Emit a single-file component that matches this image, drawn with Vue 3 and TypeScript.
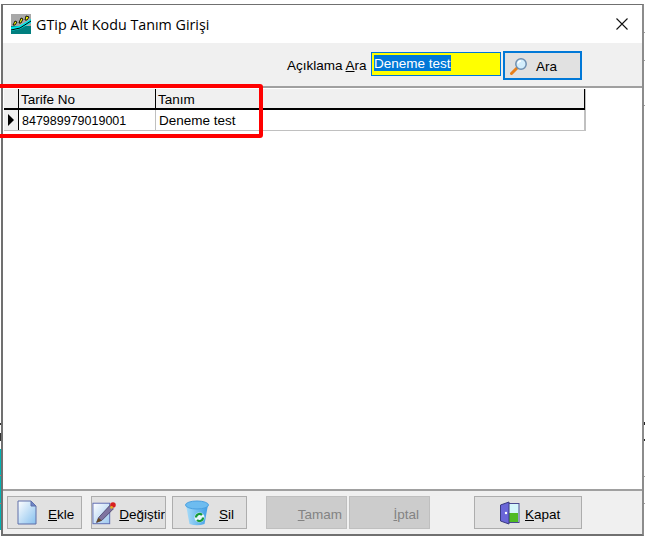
<script setup lang="ts">
interface Row { no: string; name: string }
interface Tick { y: number; h: number; color: string }
const rows: Row[] = [{ no: '847989979019001', name: 'Deneme test' }]
const rightTicks: Tick[] = [
  { y: 32, h: 1, color: '#9a9a9a' },
  { y: 60, h: 1, color: '#9a9a9a' },
  { y: 105, h: 1, color: '#9a9a9a' },
  { y: 422, h: 3, color: '#222222' },
  { y: 439, h: 2, color: '#222222' },
  { y: 476, h: 1, color: '#9a9a9a' },
  { y: 503, h: 1, color: '#9a9a9a' },
]
</script>

<template>
  <div class="page">
    <svg class="backdrop" width="645" height="538" viewBox="0 0 645 538">
      <rect x="0" y="449" width="2" height="81" fill="#00b4b4" />
      <rect x="0" y="423" width="2" height="2" fill="#333" />
      <rect x="0" y="433" width="2" height="8" fill="#333" />
      <rect x="0" y="475" width="2" height="1" fill="#c86a6a" />
      <rect x="0" y="503" width="2" height="1" fill="#c86a6a" />
      <rect v-for="t in rightTicks" :key="t.y" x="644" :y="t.y" width="1" :height="t.h" :fill="t.color" />
    </svg>
    <div class="window">
      <header class="titlebar">
        <svg class="logo" width="20" height="20" viewBox="0 0 20 20">
          <rect width="20" height="20" fill="#a8a8a8" />
          <rect y="12" width="20" height="8" fill="#007f7f" />
          <path d="M0 13 L8 12 L20 5 V9 L9 15 L0 17Z" fill="#00e6e6" />
          <path d="M0 16 L9 14 L20 7" stroke="#000" stroke-width="1" fill="none" />
          <path d="M2 11l2-4 2 1-2 3zM8 9l2-5 2 1-2 4zM14 6l1-4 3 1-2 3z" fill="#ffff00" stroke="#000" stroke-width=".9" />
        </svg>
        <span class="title">GTip Alt Kodu Tanım Girişi</span>
        <svg class="close" width="12" height="12" viewBox="0 0 12 12">
          <path d="M0.5 0.5 L11.5 11.5 M11.5 0.5 L0.5 11.5" stroke="#111" stroke-width="1.1" fill="none" />
        </svg>
      </header>

      <section class="toolbar">
        <label class="search-label">Açıklama <u>A</u>ra</label>
        <div class="search-input"><span class="selected">Deneme test</span></div>
        <button class="search-button" type="button">
          <svg width="18" height="18" viewBox="0 0 18 18">
            <path d="M1.5 16.5 L7 11" stroke="#e8801a" stroke-width="3" stroke-linecap="round" />
            <circle cx="11" cy="7" r="5.2" fill="#d4eefc" stroke="#6f8fb0" stroke-width="1.5" />
            <path d="M8 6.5a3 3 0 0 1 3-2.5" stroke="#fff" stroke-width="1.4" fill="none" />
          </svg>
          <span>Ara</span>
        </button>
      </section>

      <main class="content">
        <div class="grid">
          <div class="grid-row head">
            <div class="cell ind"></div>
            <div class="cell no">Tarife No</div>
            <div class="cell name">Tanım</div>
          </div>
          <div v-for="row in rows" :key="row.no" class="grid-row body-row">
            <div class="cell ind"><i class="arrow"></i></div>
            <div class="cell no">{{ row.no }}</div>
            <div class="cell name">{{ row.name }}</div>
          </div>
        </div>
      </main>

      <footer class="actions">
        <button class="btn ekle" type="button">
          <svg width="20" height="25" viewBox="0 0 20 25">
            <defs>
              <linearGradient id="paper" x1="0" y1="0" x2="1" y2="1">
                <stop offset="0" stop-color="#ffffff" />
                <stop offset="1" stop-color="#86c0ee" />
              </linearGradient>
            </defs>
            <path d="M1 1H14L19 6V24H1Z" fill="url(#paper)" stroke="#5f6fa8" />
            <path d="M14 1V6H19Z" fill="#6f86c8" stroke="#5f6fa8" />
          </svg>
          <span><u>E</u>kle</span>
        </button>
        <button class="btn degistir" type="button">
          <svg width="26" height="26" viewBox="0 0 26 26">
            <defs>
              <linearGradient id="paper2" x1="0" y1="0" x2="1" y2="1">
                <stop offset="0" stop-color="#ffffff" />
                <stop offset="1" stop-color="#9cc8ee" />
              </linearGradient>
            </defs>
            <rect x="1" y="2.5" width="18" height="22" fill="url(#paper2)" stroke="#5a68b0" />
            <path d="M7 18 L19 5 L23 8.5 L10.5 21 L5 23Z" fill="#7e74a0" stroke="#3e3660" stroke-width=".8" />
            <path d="M4.5 23.5L7 18L10.5 21Z" fill="#6a4a20" />
            <circle cx="22.5" cy="4.5" r="3" fill="#d81e1e" />
            <circle cx="21" cy="7" r="1.5" fill="#e8b020" />
          </svg>
          <span class="clip"><u>D</u>eğiştir</span>
        </button>
        <button class="btn sil" type="button">
          <svg width="24" height="26" viewBox="0 0 24 26">
            <defs>
              <linearGradient id="bin" x1="0" y1="0" x2="1" y2="0">
                <stop offset="0" stop-color="#a8dcf8" />
                <stop offset="1" stop-color="#3f9ee6" />
              </linearGradient>
            </defs>
            <path d="M1 5 L4.5 24 Q12 26.5 19.5 24 L23 5Z" fill="url(#bin)" />
            <ellipse cx="12" cy="5" rx="11.5" ry="4" fill="#6dbcf0" stroke="#4aa0e0" />
            <circle cx="14.5" cy="17.5" r="5" fill="#e8f6fc" />
            <path d="M11 17.5a3.5 3.5 0 0 1 6-2.5M18 17.5a3.5 3.5 0 0 1-6 2.5" stroke="#159a38" stroke-width="2.2" fill="none" />
          </svg>
          <span><u>S</u>il</span>
        </button>
        <button class="btn tamam" type="button" disabled><span><u>T</u>amam</span></button>
        <button class="btn iptal" type="button" disabled><span><u>İ</u>ptal</span></button>
        <button class="btn kapat" type="button">
          <svg width="20" height="24" viewBox="0 0 20 24">
            <rect x="8" y="2.5" width="11" height="19" fill="#d4f6fb" stroke="#4a4a90" />
            <rect x="9" y="12" width="9" height="9" fill="#4fbb24" />
            <path d="M0.5 4 L9 1 V23 L0.5 20Z" fill="#6a66d8" stroke="#3a3a80" />
            <circle cx="6" cy="12" r="1.2" fill="#fff" />
          </svg>
          <span><u>K</u>apat</span>
        </button>
      </footer>
    </div>
    <div class="highlight"></div>
  </div>
</template>

<style>
html, body { margin: 0; background: #ffffff; overflow: hidden; }
</style>

<style scoped>
.page {
  position: relative;
  width: 645px;
  height: 538px;
  padding: 4px 0 0 1px;
  box-sizing: border-box;
  overflow: hidden;
  font-family: "Liberation Sans", Arial, sans-serif;
  font-size: 13.5px;
  color: #000;
}
.backdrop {
  position: absolute;
  left: 0;
  top: 0;
}
.window {
  position: relative;
  width: 643px;
  height: 532px;
  box-sizing: border-box;
  border: 1px solid #707070;
  border-left-width: 2px;
  border-right: 2px solid #8c8c8c;
  border-bottom-width: 2px;
  background: #fff;
  display: flex;
  flex-direction: column;
}
.titlebar {
  height: 38px;
  display: flex;
  align-items: center;
  padding: 0 14px 0 8px;
  flex: none;
}
.logo { margin-right: 5px; }
.title {
  font-family: "Open Sans", "Noto Sans", sans-serif;
  font-size: 14.3px;
  flex: 1;
}
.toolbar {
  height: 45px;
  flex: none;
  box-sizing: border-box;
  background: #f0f0f0;
  border-bottom: 2px solid #a0a0a0;
  display: flex;
  align-items: flex-start;
  padding: 8px 0 0 284px;
}
.search-label { margin-top: 7px; width: 84px; white-space: nowrap; }
.search-input {
  box-sizing: border-box;
  width: 130px;
  height: 24px;
  border: 1px solid #0078d7;
  background: #ffff00;
  padding: 2px;
  margin-top: 1px;
  line-height: 17px;
}
.selected { display: inline-block; width: 77px; background: #0078d7; color: #fff; height: 16px; line-height: 17px; white-space: nowrap; }
.search-button {
  box-sizing: border-box;
  width: 79px;
  height: 29px;
  margin-left: 2px;
  border: 2px solid #0078d7;
  background: #e1e1e1;
  display: flex;
  align-items: center;
  padding: 0 0 0 5px;
  font: inherit;
  color: #000;
}
.search-button span { margin-left: 8px; padding-top: 2px; }
.content {
  flex: 1;
  min-height: 0;
  background: #fff;
  padding: 1px 0 0 1px;
}
.grid { width: 582px; border-right: 1px solid #c0c0c0; border-bottom: 1px solid #c0c0c0; box-sizing: border-box; }
.grid-row { display: grid; grid-template-columns: 15px 137px 1fr; }
.head { height: 21px; background: #f0f0f0; border-bottom: 2px solid #000; box-sizing: border-box; }
.head .cell { border-right: 1px solid #000; line-height: 22px; }
.body-row { height: 20px; }
.cell { padding-left: 2px; white-space: nowrap; overflow: hidden; line-height: 22px; box-sizing: border-box; }
.body-row .cell { border-right: 1px solid #c0c0c0; }
.body-row .no { font-size: 12.5px; padding-left: 3px; }
.body-row .name { padding-left: 3px; }
.body-row .ind { background: #f0f0f0; border-right: 1px solid #000; padding: 0; display: flex; align-items: center; justify-content: center; }
.arrow {
  width: 0; height: 0;
  border-left: 6px solid #000;
  border-top: 6px solid transparent;
  border-bottom: 6px solid transparent;
}
.actions {
  height: 45px;
  flex: none;
  box-sizing: border-box;
  background: #f0f0f0;
  border-top: 2px solid #a0a0a0;
  display: flex;
  align-items: flex-start;
  padding: 5px 0 0 4px;
}
.btn {
  box-sizing: border-box;
  height: 33px;
  border: 1px solid #adadad;
  background: #e1e1e1;
  display: flex;
  align-items: center;
  padding: 0 0 0 9px;
  font: inherit;
  color: #000;
  white-space: nowrap;
  overflow: hidden;
}
.btn span { padding-top: 3px; }
.btn[disabled] { background: #cccccc; border-color: #bfbfbf; color: #838383; justify-content: flex-end; padding: 0 4px 0 0; }
.ekle { width: 75px; }
.ekle span { margin-left: 11px; }
.degistir { width: 75px; margin-left: 9px; padding-left: 0; }
.degistir span { margin-left: 3px; }
.sil { width: 75px; margin-left: 6px; padding-left: 12px; }
.sil span { margin-left: 10px; }
.tamam { width: 81px; margin-left: 19px; }
.iptal { width: 81px; margin-left: 2px; }
.iptal.btn[disabled] { padding-right: 10px; }
.kapat { width: 108px; margin-left: 44px; padding-left: 25px; }
.kapat span { margin-left: 5px; }
.highlight {
  position: absolute;
  left: -10px;
  top: 84px;
  width: 272.5px;
  height: 54px;
  box-sizing: border-box;
  border: 4px solid #f00;
  border-radius: 3px;
  pointer-events: none;
}
</style>
